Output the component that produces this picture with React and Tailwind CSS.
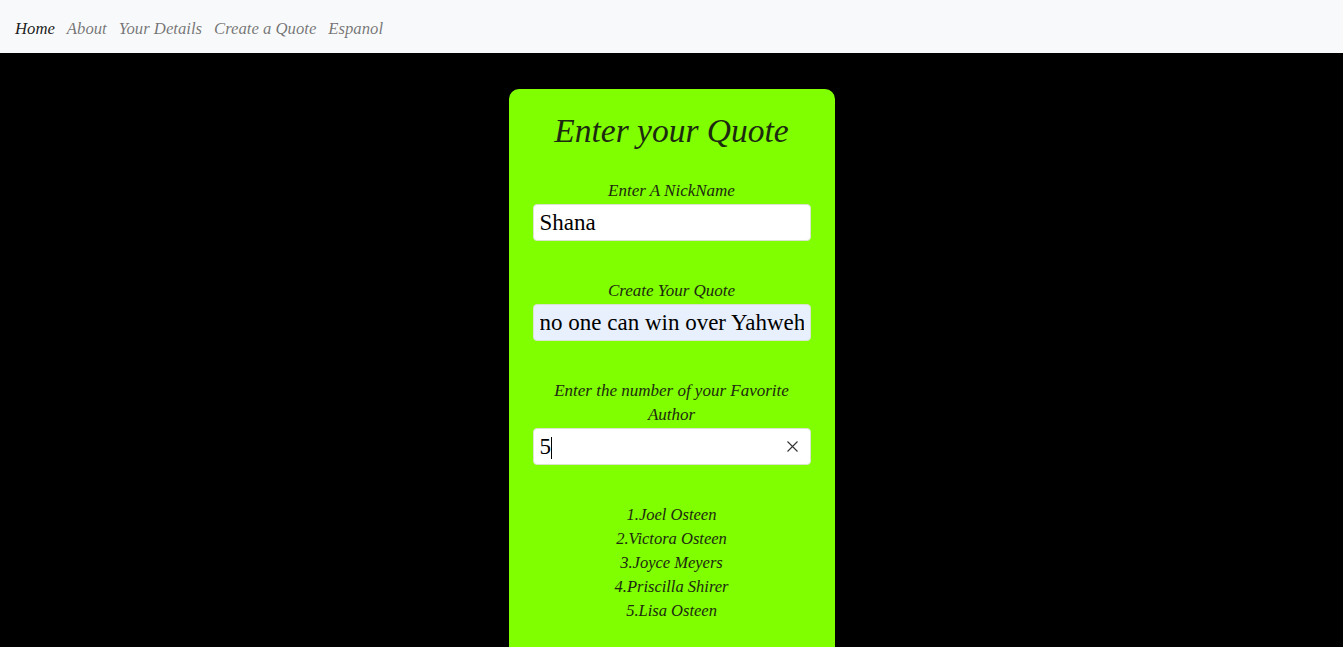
import { useState } from 'react';

const NAV_LINKS = ['Home', 'About', 'Your Details', 'Create a Quote', 'Espanol'];

const AUTHORS = ['1.Joel Osteen', '2.Victora Osteen', '3.Joyce Meyers', '4.Priscilla Shirer', '5.Lisa Osteen'];

const inputCls =
  "w-full h-[37px] rounded-[4px] border border-[#d9e3cf] px-[6px] not-italic text-[23px] text-black outline-none [font-family:'Liberation_Serif',serif]";

export default function App() {
  const [nickname, setNickname] = useState('Shana');
  const [quote, setQuote] = useState('no one can win over Yahweh');
  const [author, setAuthor] = useState('5');

  return (
    <div className="min-h-screen bg-black font-['Liberation_Serif','DejaVu_Serif',serif]">
      {/* Navbar */}
      <nav className="h-[53px] bg-[#f8f9fa] flex items-center pl-[15px] gap-[12px] italic text-[16.7px] pt-[4px]">
        {NAV_LINKS.map((link, i) => (
          <a
            key={link}
            href="#"
            className={i === 0 ? 'text-black/90' : 'text-black/55'}
          >
            {link}
          </a>
        ))}
      </nav>

      {/* Quote card */}
      <div className="flex justify-center pt-[36px]">
        <div className="w-[326px] bg-[#7fff00] rounded-t-[10px] px-[24px] pt-[22px] pb-[40px] text-center italic text-[#1c2a10]">
          <h1 className="text-[33.5px] leading-[40px]">Enter your Quote</h1>

          <label className="block mt-[28px] text-[17px] leading-[24px]">Enter A NickName</label>
          <input
            value={nickname}
            onChange={(e) => setNickname(e.target.value)}
            className={`mt-[1px] bg-white ${inputCls}`}
          />

          <label className="block mt-[38px] text-[17px] leading-[24px]">Create Your Quote</label>
          <input
            value={quote}
            onChange={(e) => setQuote(e.target.value)}
            className={`mt-[1px] bg-[#e8f0fe] ${inputCls}`}
          />

          <label className="block mt-[38px] text-[17px] leading-[24px] px-[10px]">
            Enter the number of your Favorite Author
          </label>
          <div className="mt-[1px] relative">
            <input
              value={author}
              onChange={(e) => setAuthor(e.target.value)}
              className={`bg-white ${inputCls}`}
            />
            <span className="absolute left-[18px] top-[9px] w-px h-[22px] bg-black" />
            <svg
              className="absolute right-[13px] top-[13px]"
              width="11"
              height="11"
              viewBox="0 0 11 11"
              fill="none"
              stroke="#333"
              strokeWidth="1.1"
            >
              <path d="M0.5 0.5 L10.5 10.5 M10.5 0.5 L0.5 10.5" />
            </svg>
          </div>

          <ul className="mt-[38px] text-[16.5px] leading-[24px]">
            {AUTHORS.map((a) => (
              <li key={a}>{a}</li>
            ))}
          </ul>
        </div>
      </div>
    </div>
  );
}
